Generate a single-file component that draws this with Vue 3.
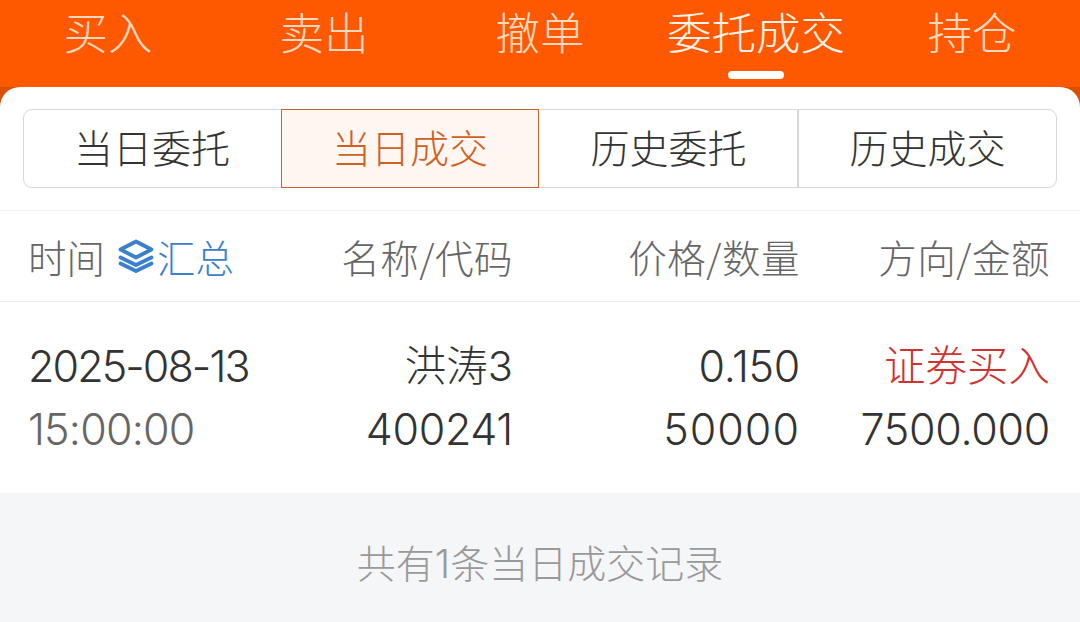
<template>
  <div class="page">
    <nav class="tabs">
      <div v-for="tab in tabs" :key="tab" class="tab" :class="{ active: tab === activeTab }">
        <span>{{ tab }}</span>
        <i v-if="tab === activeTab" class="tab-line"></i>
      </div>
    </nav>

    <main class="panel">
      <div class="segments">
        <div
          v-for="seg in segments"
          :key="seg"
          class="segment"
          :class="{ active: seg === activeSegment }"
        >
          {{ seg }}
        </div>
      </div>

      <div class="grid head">
        <div class="time-head">
          <span>时间</span>
          <svg class="layers" viewBox="0 0 36 34" fill="none" stroke="#3a80cc" stroke-width="3.8" stroke-linecap="round" stroke-linejoin="round">
            <path d="M18 2.5 33.5 10.5 18 18.5 2.5 10.5Z" />
            <path d="M2.5 18.5 18 26 33.5 18.5" />
            <path d="M2.5 24.5 18 32 33.5 24.5" />
          </svg>
          <span class="summary">汇总</span>
        </div>
        <div class="right title">名称/代码</div>
        <div class="right title">价格/数量</div>
        <div class="right title">方向/金额</div>
      </div>

      <div class="grid row">
        <div class="cell">
          <div class="date">{{ trade.date }}</div>
          <div class="muted">{{ trade.time }}</div>
        </div>
        <div class="cell right">
          <div class="cjk">{{ trade.name }}</div>
          <div>{{ trade.code }}</div>
        </div>
        <div class="cell right">
          <div>{{ trade.price }}</div>
          <div class="qty">{{ trade.qty }}</div>
        </div>
        <div class="cell right">
          <div class="cjk red">{{ trade.side }}</div>
          <div>{{ trade.amount }}</div>
        </div>
      </div>

      <footer class="foot">共有1条当日成交记录</footer>
    </main>
  </div>
</template>

<script setup>
const tabs = ["买入", "卖出", "撤单", "委托成交", "持仓"];
const activeTab = "委托成交";
const segments = ["当日委托", "当日成交", "历史委托", "历史成交"];
const activeSegment = "当日成交";

const trade = {
  date: "2025-08-13",
  time: "15:00:00",
  name: "洪涛3",
  code: "400241",
  price: "0.150",
  qty: "50000",
  side: "证券买入",
  amount: "7500.000",
};
</script>

<style scoped>
.page {
  width: 1080px;
  height: 622px;
  overflow: hidden;
  background: linear-gradient(#fe5900 87px, #d84f05 87px);
  font-family: Inter, "Noto Sans CJK SC", sans-serif;
  color: #333;
}

.tabs {
  height: 87px;
  display: grid;
  grid-template-columns: repeat(5, 216px);
}

.tab {
  position: relative;
  text-align: center;
  font-size: 44.5px;
  line-height: 69px;
  font-weight: 300;
  color: #ffd9bf;
}

.tab.active {
  color: #fff2e8;
}

.tab-line {
  position: absolute;
  left: 80px;
  top: 71px;
  width: 56px;
  height: 8px;
  border-radius: 4px;
  background: #fff;
}

.panel {
  height: 535px;
  background: #fff;
  border-radius: 20px 20px 0 0;
  display: flex;
  flex-direction: column;
}

.segments {
  margin: 22px 23px 0;
  height: 79px;
  box-sizing: border-box;
  display: grid;
  grid-template-columns: repeat(4, 1fr);
  border: 1px solid #d5d7d9;
  border-radius: 9px;
}

.segment {
  margin-left: -1px;
  text-align: center;
  font-size: 39px;
  line-height: 77px;
  font-weight: 300;
  color: #333;
  border-left: 2px solid #d5d7d9;
}

.segment:first-child {
  margin-left: 0;
  padding-right: 2px;
  border-left: none;
}

.segment.active {
  margin: -1px 1px -1px -1px;
  color: #d0601f;
  background: #fef6f1;
  border: 1px solid #c9622a;
}

.segment.active + .segment {
  border-left: none;
}

.grid {
  display: grid;
  grid-template-columns: 241px 244px 287px 250px;
  padding-left: 28px;
}

.head {
  margin-top: 22px;
  height: 92px;
  box-sizing: border-box;
  align-items: center;
  border-top: 1px solid #f1f1f1;
  border-bottom: 1px solid #ececec;
  font-family: "Noto Sans CJK SC", sans-serif;
  font-size: 38.5px;
  font-weight: 300;
  color: #666;
}

.title {
  letter-spacing: 0.5px;
}

.time-head {
  display: flex;
  align-items: center;
}

.layers {
  width: 36px;
  height: 34px;
  margin-left: 13px;
}

.summary {
  margin-left: 3px;
  color: #3a80cc;
}

.right {
  text-align: right;
}

.row {
  height: 191px;
  box-sizing: border-box;
  padding-top: 33px;
  font-size: 43px;
  font-weight: 300;
  line-height: 63px;
  letter-spacing: -0.3px;
}

.date {
  letter-spacing: -1.9px;
}

.cjk {
  font-size: 41.5px;
  letter-spacing: 0;
}

.qty {
  letter-spacing: 1px;
}

.muted {
  color: #666;
  letter-spacing: -0.8px;
}

.red {
  color: #d0322f;
}

.foot {
  flex: 1;
  padding-top: 44px;
  background: #f5f6f7;
  text-align: center;
  font-size: 39px;
  line-height: 54px;
  font-weight: 300;
  color: #999;
}
</style>
